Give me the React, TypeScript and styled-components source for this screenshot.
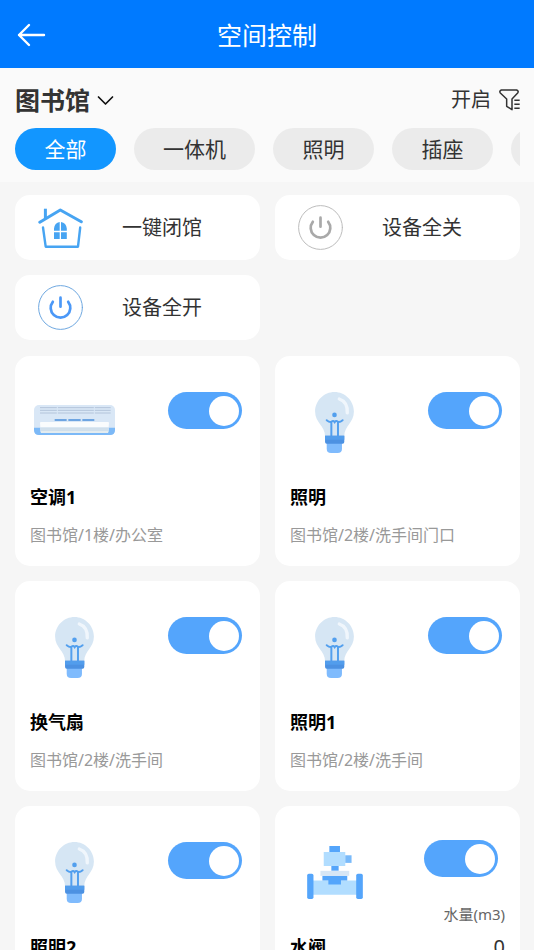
import React, { useState } from 'react';
import styled, { createGlobalStyle } from 'styled-components';

const GlobalStyle = createGlobalStyle`
  * { box-sizing: border-box; }
  html { scrollbar-width: none; }
  body {
    margin: 0;
    background: #f6f6f6;
    color: #333;
    font-family: "Noto Sans", "Noto Sans CJK SC", sans-serif;
  }
  button, select { font-family: inherit; color: inherit; border: 0; background: none; padding: 0; cursor: pointer; }
  svg { display: block; flex: none; }
`;

const Header = styled.header`
  display: grid;
  grid-template-columns: 48px 1fr 48px;
  align-items: center;
  height: 68px;
  padding: 2px 0 0;
  background: #007aff;
  color: #fff;
`;

const BackButton = styled.button`
  display: flex;
  padding-left: 17px;
`;

const Title = styled.h1`
  margin: 0;
  text-align: center;
  font-size: 25px;
  line-height: 36px;
  font-weight: 400;
`;

const FilterPanel = styled.section`
  display: flex;
  flex-direction: column;
  gap: 10px;
  padding: 14px 14px 12px 15px;
  background: #fafafa;
`;

const FilterRow = styled.div`
  display: flex;
  align-items: center;
  justify-content: space-between;
  height: 36px;
`;

const PlaceLabel = styled.label`
  display: flex;
  align-items: center;
  gap: 7px;
`;

const PlaceSelect = styled.select`
  appearance: none;
  field-sizing: content;
  outline: none;
  font-size: 25px;
  line-height: 36px;
  font-weight: 700;
`;

const StateButton = styled.button`
  display: flex;
  align-items: center;
  gap: 8px;
  font-size: 20px;
  line-height: 36px;
`;

const Chips = styled.nav`
  display: flex;
  gap: 18px;
  overflow-x: auto;
  scrollbar-width: none;
`;

const Chip = styled.button<{ $active?: boolean }>`
  flex: none;
  min-width: 101px;
  height: 42px;
  padding: 0 29px;
  border-radius: 21px;
  font-size: 21px;
  line-height: 42px;
  background: ${(p) => (p.$active ? '#1296ff' : '#ebebeb')};
  color: ${(p) => (p.$active ? '#fff' : '#333')};
`;

const Content = styled.main`
  display: flex;
  flex-direction: column;
  gap: 16px;
  padding: 13px 14px 15px 15px;
`;

const Grid = styled.div`
  display: grid;
  grid-template-columns: 1fr 1fr;
  gap: 15px;
`;

const QuickCard = styled.button`
  display: flex;
  align-items: center;
  gap: 39px;
  height: 65px;
  padding: 0 23px;
  border-radius: 15px;
  background: #fff;
  font-size: 20px;
  line-height: 30px;
`;

const DeviceCard = styled.article`
  padding: 21px 15px 19px;
  border-radius: 15px;
  background: #fff;
`;

const DeviceTop = styled.div`
  display: flex;
  justify-content: space-between;
  height: 90px;
`;

const Picture = styled.div`
  display: flex;
  align-items: center;
  justify-content: center;
  width: 89px;
`;

const Controls = styled.div<{ $metered?: boolean }>`
  display: flex;
  flex-direction: column;
  align-items: flex-end;
  padding-top: ${(p) => (p.$metered ? 13 : 15)}px;
`;

const Switch = styled.input<{ $metered?: boolean }>`
  appearance: none;
  display: flex;
  flex: none;
  align-items: center;
  width: 74px;
  height: 37px;
  margin: 0 ${(p) => (p.$metered ? 7 : 3)}px 0 0;
  padding: 0 3px;
  border-radius: 19px;
  background: #d8d8d8;
  cursor: pointer;

  &::before {
    content: "";
    width: 30px;
    height: 30px;
    border-radius: 50%;
    background: #fff;
  }
  &:checked {
    justify-content: flex-end;
    background: #54a5fc;
  }
`;

const MeterLabel = styled.span`
  margin-top: 27px;
  font-size: 15px;
  line-height: 20px;
  color: #666;
`;

const NameRow = styled.div`
  display: flex;
  align-items: center;
  justify-content: space-between;
  height: 24px;
  margin: 18px 0 14px;
`;

const Name = styled.h2`
  margin: 0;
  font-size: 18px;
  line-height: 24px;
  font-weight: 700;
  color: #000;
`;

const MeterValue = styled.span`
  font-size: 20px;
  line-height: 24px;
`;

const Location = styled.p`
  min-height: 24px;
  margin: 0;
  font-size: 16px;
  line-height: 24px;
  color: #999;
`;

const BackIcon = () => (
  <svg width="29" height="24" viewBox="0 0 29 24" fill="none" stroke="#fff" strokeWidth="2.4" strokeLinecap="round" strokeLinejoin="round">
    <path d="M12 2 2 12l10 10M2 12h25" />
  </svg>
);

const ChevronIcon = () => (
  <svg width="17" height="11" viewBox="0 0 17 11" fill="none" stroke="#111" strokeWidth="1.7" strokeLinecap="round" strokeLinejoin="round">
    <path d="m1.500 2 7 7 7-7" />
  </svg>
);

const FunnelIcon = () => (
  <svg width="21" height="22" viewBox="0 0 63 66" fill="none" stroke="#333" strokeWidth="4.500" strokeLinejoin="round">
    <path d="M7 3h46q7 3 3 9L39 30v32L23 52V30L4 12Q0 6 7 3Z" />
    <path d="M46 34h16M46 46h16M46 58h16" />
  </svg>
);

const HouseIcon = () => (
  <svg width="45" height="45" viewBox="0 0 45 45" fill="none" stroke="#47a4f2" strokeLinecap="round" strokeLinejoin="round">
    <path d="M1.800 17.200 22.300 5l21 11.700" strokeWidth="3" />
    <path d="M7.400 3.700v9.800" strokeWidth="3" strokeLinecap="butt" />
    <path d="m5 22.500 2.700 19.200H40l2.200-19.200" strokeWidth="2.400" />
    <g fill="#47a4f2" stroke="none">
      <path d="M21.700 17v8.700H16v-2.200q.6-5.700 5.700-6.500ZM23 17v8.700h5.800v-2.200q-.6-5.700-5.800-6.500Z" />
      <path d="M16 27.300h5.700V34H16zM23 27.300h5.800V34H23z" />
    </g>
  </svg>
);

const PowerIcon = ({ ring, color }: { ring: string; color: string }) => (
  <svg width="45" height="45" viewBox="0 0 45 45" fill="none" strokeLinecap="round">
    <circle cx="22.500" cy="22.500" r="21.900" stroke={ring} strokeWidth="1" />
    <path d="M14.800 16.800a9.800 9.800 0 1 0 15.400 0M22.500 12.700v9" stroke={color} strokeWidth="2.700" />
  </svg>
);

const AirConditionerIcon = () => (
  <svg width="81" height="34" viewBox="0 0 243 102">
    <rect width="243" height="90" rx="15" fill="#d9e7f6" />
    <path d="M0 68h243v7q0 15-15 15H15Q0 90 0 75Z" fill="#7cb9f7" />
    <path d="M18 8h212M18 16h212M18 24h212" stroke="#b3c4da" strokeWidth="3" />
    <path d="M70 4v24M181 4v24" stroke="#d9e7f6" strokeWidth="3" />
    <path d="M62 45h36M103 45h37M145 45h36" stroke="#4b90dc" strokeWidth="4" />
    <path d="M18 53q0-2 3-2h201q3 0 3 2l-2 27q0 4-4 4H24q-4 0-4-4Z" fill="#fafcfd" />
    <path d="M19 68h205l-1 12q0 4-4 4H24q-4 0-4-4Z" fill="#e4ecef" />
    <path d="M19 69h205M20 75h203" stroke="#a9c7e6" strokeWidth="2" />
  </svg>
);

const BulbIcon = () => (
  <svg width="39" height="61" viewBox="0 0 117 184" fill="none" strokeLinecap="round">
    <path d="M58.500 0C90 0 117 26 117 59c0 34-29 44-29 74H30C30 103 0 93 0 59 0 26 27 0 58.500 0Z" fill="#d6e6f4" />
    <path d="M73 21q26 9 24 42" stroke="#f0f6fc" strokeWidth="10" />
    <circle cx="58.500" cy="69" r="7" fill="#529fee" />
    <path d="M35 85q10 8 15 4t9 2q4-6 9-2t15-4M49 91v40M69 91v40" stroke="#529fee" strokeWidth="6" />
    <path d="M35 153h46v18q0 13-13 13H48q-13 0-13-13Z" fill="#7fbbfd" />
    <path d="M30 132h58v19q0 5-5 5H35q-5 0-5-5Z" fill="#4c91e2" />
    <path d="M30 132h58v12H30z" fill="#529dec" />
  </svg>
);

const ValveIcon = () => (
  <svg width="56" height="53" viewBox="0 0 168 160">
    <path d="M16 104h136v43H16zM50 18h65v42H50z" fill="#b1ddff" />
    <path d="M67 0h32v18H67zM73 60h22v15H73zM46 90h75v14h-19v12H64v-12H46z" fill="#54a5fb" />
    <path d="M115 28h19v23h-19z" fill="#79bafa" />
    <path d="M40 75h87v15H40z" fill="#d7e6f5" />
    <rect y="84" width="19" height="76" rx="5" fill="#54a5fb" />
    <rect x="148" y="84" width="20" height="76" rx="5" fill="#54a5fb" />
  </svg>
);

const icons = { air: AirConditionerIcon, bulb: BulbIcon, valve: ValveIcon };

type Device = {
  name: string;
  icon: keyof typeof icons;
  location?: string;
  meter?: { label: string; value: string };
};

const devices: Device[] = [
  { name: '空调1', icon: 'air', location: '图书馆/1楼/办公室' },
  { name: '照明', icon: 'bulb', location: '图书馆/2楼/洗手间门口' },
  { name: '换气扇', icon: 'bulb', location: '图书馆/2楼/洗手间' },
  { name: '照明1', icon: 'bulb', location: '图书馆/2楼/洗手间' },
  { name: '照明2', icon: 'bulb' },
  { name: '水阀', icon: 'valve', meter: { label: '水量(m3)', value: '0' } },
];

const categories = ['全部', '一体机', '照明', '插座', ''];

function DeviceTile({ name, icon, location, meter }: Device) {
  const Icon = icons[icon];
  return (
    <DeviceCard>
      <DeviceTop>
        <Picture><Icon /></Picture>
        <Controls $metered={!!meter}>
          <Switch type="checkbox" role="switch" defaultChecked aria-label={name} $metered={!!meter} />
          {meter && <MeterLabel>{meter.label}</MeterLabel>}
        </Controls>
      </DeviceTop>
      <NameRow>
        <Name>{name}</Name>
        {meter && <MeterValue>{meter.value}</MeterValue>}
      </NameRow>
      <Location>{location}</Location>
    </DeviceCard>
  );
}

export default function App() {
  const [category, setCategory] = useState(0);
  return (
    <>
      <GlobalStyle />
      <Header>
        <BackButton type="button" aria-label="返回"><BackIcon /></BackButton>
        <Title>空间控制</Title>
      </Header>
      <FilterPanel>
        <FilterRow>
          <PlaceLabel>
            <PlaceSelect aria-label="图书馆"><option>图书馆</option></PlaceSelect>
            <ChevronIcon />
          </PlaceLabel>
          <StateButton type="button">开启<FunnelIcon /></StateButton>
        </FilterRow>
        <Chips>
          {categories.map((label, i) => (
            <Chip key={i} type="button" $active={i === category} onClick={() => setCategory(i)}>{label}</Chip>
          ))}
        </Chips>
      </FilterPanel>
      <Content>
        <Grid>
          <QuickCard type="button"><HouseIcon />一键闭馆</QuickCard>
          <QuickCard type="button"><PowerIcon ring="#bdbdbd" color="#a9a9a9" />设备全关</QuickCard>
          <QuickCard type="button"><PowerIcon ring="#6fa8e0" color="#4b98f7" />设备全开</QuickCard>
        </Grid>
        <Grid>
          {devices.map((device) => <DeviceTile key={device.name} {...device} />)}
        </Grid>
      </Content>
    </>
  );
}
